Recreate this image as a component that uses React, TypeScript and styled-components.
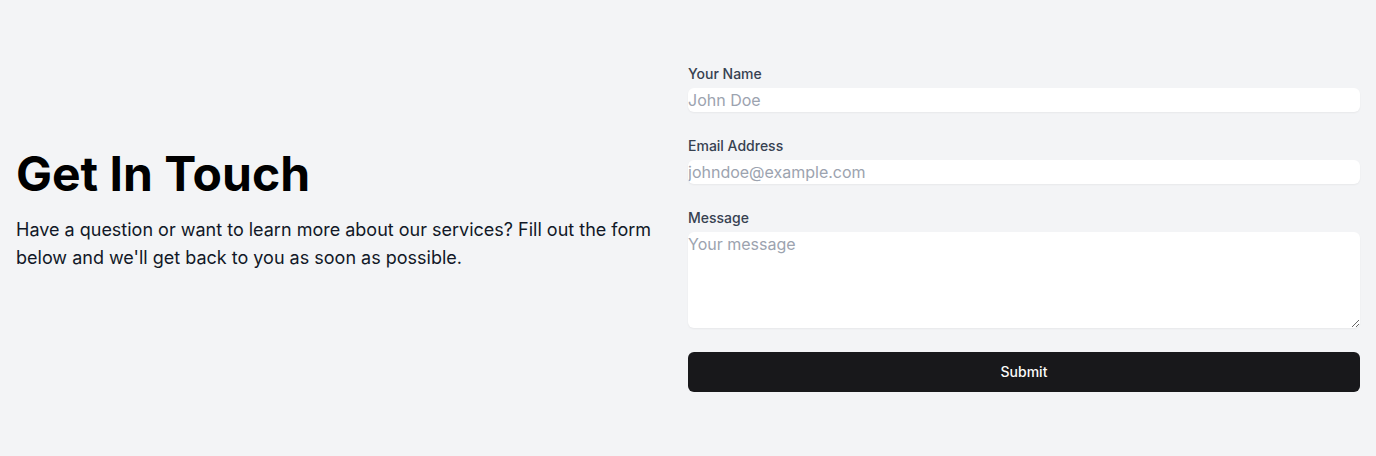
import styled, { createGlobalStyle } from 'styled-components';

const GlobalStyle = createGlobalStyle`
  html, body {
    margin: 0;
    padding: 0;
    background: #f3f4f6;
    font-family: Inter, "Noto Sans", sans-serif;
  }
  * { box-sizing: border-box; }
`;

export default function App() {
  return (
    <>
      <GlobalStyle />
      <Page>
        <Intro>
          <Title>Get In Touch</Title>
          <Lead>
            Have a question or want to learn more about our services? Fill out the form
            below and we'll get back to you as soon as possible.
          </Lead>
        </Intro>
        <Form onSubmit={(e) => e.preventDefault()}>
          <Field>
            <Label htmlFor="name">Your Name</Label>
            <Input id="name" type="text" placeholder="John Doe" />
          </Field>
          <Field>
            <Label htmlFor="email">Email Address</Label>
            <Input id="email" type="email" placeholder="johndoe@example.com" />
          </Field>
          <Field>
            <Label htmlFor="message">Message</Label>
            <TextArea id="message" rows={4} placeholder="Your message" />
          </Field>
          <SubmitButton type="submit">Submit</SubmitButton>
        </Form>
      </Page>
    </>
  );
}

const Page = styled.main`
  display: grid;
  grid-template-columns: minmax(0, 640px) minmax(0, 1fr);
  gap: 32px;
  padding: 64px 16px;
  min-height: 456px;
`;

const Intro = styled.section`
  display: flex;
  flex-direction: column;
  justify-content: center;
  padding-bottom: 34px;
`;

const Title = styled.h1`
  margin: 0 0 18px;
  font-size: 48px;
  line-height: 1;
  font-weight: 700;
  color: #000;
`;

const Lead = styled.p`
  margin: 0;
  font-size: 18px;
  line-height: 28px;
  color: #111827;
`;

const Form = styled.form`
  display: flex;
  flex-direction: column;
  gap: 24px;
`;

const Field = styled.div`
  display: flex;
  flex-direction: column;
  gap: 4px;
`;

const Label = styled.label`
  font-size: 14px;
  line-height: 20px;
  font-weight: 500;
  color: #374151;
`;

const Input = styled.input`
  display: block;
  width: 100%;
  height: 24px;
  padding: 0;
  border: none;
  border-radius: 6px;
  background: #fff;
  box-shadow: 0 1px 2px rgba(0, 0, 0, 0.05);
  font-family: inherit;
  font-size: 16px;
  line-height: 24px;
  color: #111827;
  outline: none;

  &::placeholder {
    color: #9ca3af;
  }
`;

const TextArea = styled.textarea`
  display: block;
  width: 100%;
  height: 96px;
  padding: 0;
  border: none;
  border-radius: 6px;
  background: #fff;
  box-shadow: 0 1px 2px rgba(0, 0, 0, 0.05);
  font-family: inherit;
  font-size: 16px;
  line-height: 24px;
  color: #111827;
  outline: none;

  &::placeholder {
    color: #9ca3af;
  }
`;

const SubmitButton = styled.button`
  height: 40px;
  border: none;
  border-radius: 6px;
  background: #18181b;
  color: #fafafa;
  font-family: inherit;
  font-size: 14px;
  font-weight: 500;
  line-height: 20px;
  cursor: pointer;
`;
